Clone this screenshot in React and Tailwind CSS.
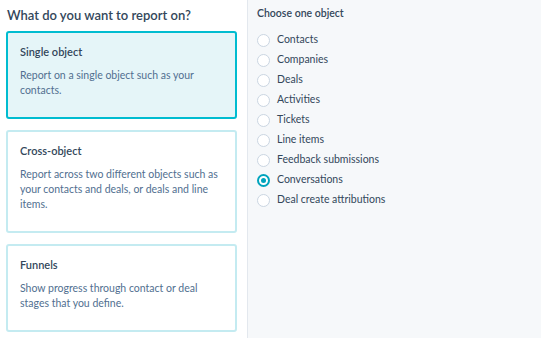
import React, {useState} from 'react';

const reportTypes = [
    {id: 'single', title: 'Single object', desc: 'Report on a single object such as your contacts.'},
    {id: 'cross', title: 'Cross-object', desc: 'Report across two different objects such as your contacts and deals, or deals and line items.'},
    {id: 'funnels', title: 'Funnels', desc: 'Show progress through contact or deal stages that you define.'},
];

const objects = [
    'Contacts',
    'Companies',
    'Deals',
    'Activities',
    'Tickets',
    'Line items',
    'Feedback submissions',
    'Conversations',
    'Deal create attributions',
];

const App = () => {
    const [type, setType] = useState('single');
    const [picked, setPicked] = useState('Conversations');

    return (
        <div className="flex w-[541px] h-[338px] overflow-hidden bg-white text-[#33475b] font-['Lato',sans-serif]">
            {/* Left: report type */}
            <div className="w-[247px] shrink-0 pl-[6px] pr-[10px]">
                <h2 className="mt-[6px] mb-[7px] text-[13px] leading-[18px] font-semibold pl-px">What do you want to report on?</h2>
                <div className="flex flex-col gap-[11px]">
                    {reportTypes.map((t) => {
                        const active = type === t.id;
                        return (
                            <button
                                key={t.id}
                                onClick={() => setType(t.id)}
                                className={`text-left rounded-[3px] pl-[12px] pr-[16px] pt-[11px] pb-[19px] ${active ? 'border-2 border-[#00bcd0] bg-[#e5f5f8]' : 'border-2 border-[#c4ebf1] bg-white'}`}
                            >
                                <div className="text-[11px] leading-[16px] font-semibold text-[#33475b]">{t.title}</div>
                                <p className="mt-[8px] text-[10.5px] leading-[15px] text-[#516f90]">{t.desc}</p>
                            </button>
                        );
                    })}
                </div>
            </div>

            {/* Right: object list */}
            <div className="flex-1 bg-[#f6f8fa] border-l border-[#e3e8ee] pl-[9px] pt-[5px]">
                <h3 className="text-[10.5px] leading-[16px] font-semibold mb-[9px]">Choose one object</h3>
                <div className="flex flex-col">
                    {objects.map((o) => {
                        const on = picked === o;
                        return (
                            <label key={o} className="flex items-center h-[20px] cursor-pointer" onClick={() => setPicked(o)}>
                                <span
                                    className={`w-[13px] h-[13px] rounded-full bg-white flex items-center justify-center ${on ? 'border-2 border-[#00a4bd]' : 'border border-[#cbd6e2]'}`}
                                >
                                    {on && <span className="w-[5px] h-[5px] rounded-full bg-[#00a4bd]"/>}
                                </span>
                                <span className="ml-[7px] text-[10.5px] text-[#33475b]">{o}</span>
                            </label>
                        );
                    })}
                </div>
            </div>
        </div>
    );
};

export default App;
